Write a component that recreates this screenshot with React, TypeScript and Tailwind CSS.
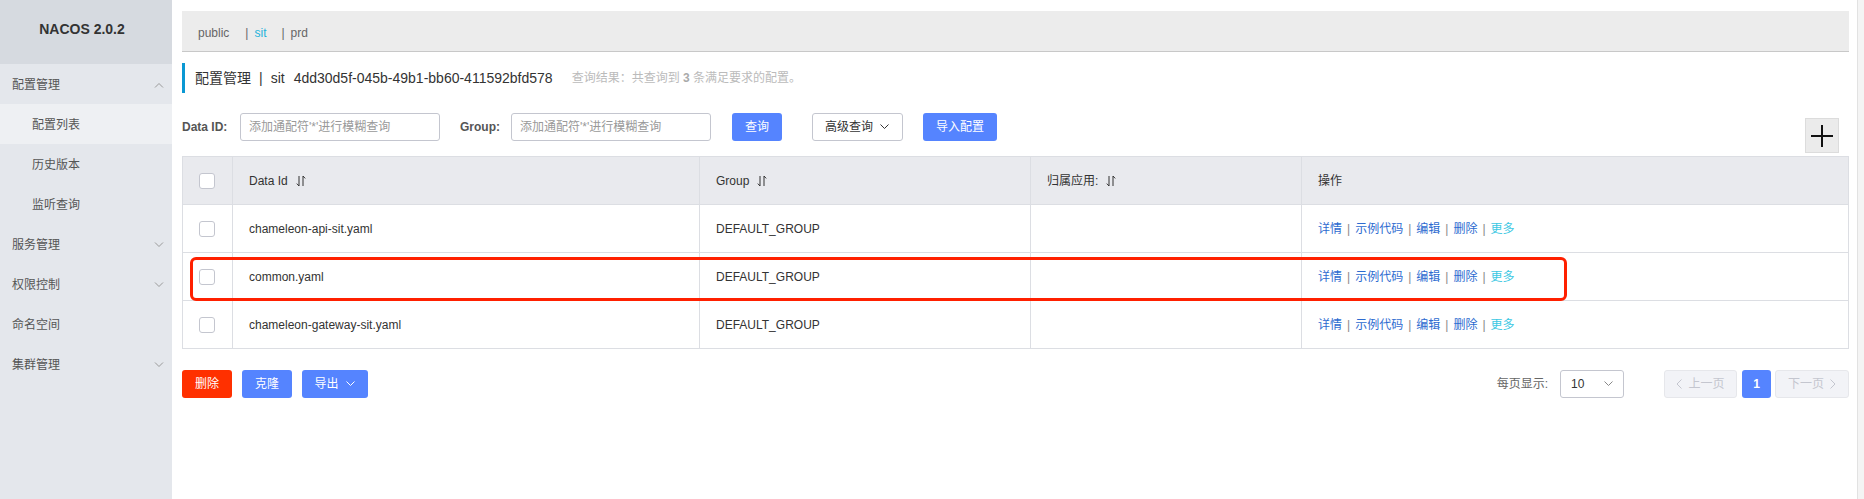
import React from 'react';

const FONT = "font-['Liberation_Sans','Noto_Sans_CJK_SC',sans-serif]";

const Chevron = ({ up = false, className = '' }: { up?: boolean; className?: string }) => (
  <svg width="10" height="6" viewBox="0 0 10 6" className={className}>
    <polyline
      points={up ? '1,5.5 5,1.5 9,5.5' : '1,0.5 5,4.5 9,0.5'}
      fill="none"
      stroke="currentColor"
      strokeWidth="1"
    />
  </svg>
);

const SortIcon = () => (
  <svg width="10" height="12" viewBox="0 0 10 12" className="ml-[8px] text-[#333]">
    <path d="M3 1V11L0.8 8.6M7 11V1L9.2 3.4" fill="none" stroke="currentColor" strokeWidth="1" />
  </svg>
);

const Checkbox = () => (
  <span className="block w-4 h-4 rounded-[3px] border border-[#c4c6cf] bg-white" />
);

const menu = [
  { label: '配置管理', open: true, children: ['配置列表', '历史版本', '监听查询'] },
  { label: '服务管理', arrow: true },
  { label: '权限控制', arrow: true },
  { label: '命名空间' },
  { label: '集群管理', arrow: true },
];

const rows = ['chameleon-api-sit.yaml', 'common.yaml', 'chameleon-gateway-sit.yaml'];

const Sidebar = () => (
  <aside className="w-[172px] shrink-0 bg-[#e4e7ec] text-[12px] text-[#555]">
    <div className="h-16 bg-[#d6dae0] flex justify-center pt-[21px] pr-[8px]">
      <span className="text-[14px] font-bold text-[#333] leading-4">NACOS 2.0.2</span>
    </div>
    {menu.map((m) => (
      <div key={m.label}>
        <div className="h-10 flex items-center justify-between pl-[12px] pr-[8px] pt-[1px]">
          <span>{m.label}</span>
          {m.open && <Chevron up className="text-[#999]" />}
          {m.arrow && <Chevron className="text-[#999]" />}
        </div>
        {m.children?.map((c, i) => (
          <div
            key={c}
            className={`h-10 flex items-center pl-[32px] pt-[1px] ${i === 0 ? 'bg-[#eef0f3]' : ''}`}
          >
            {c}
          </div>
        ))}
      </div>
    ))}
  </aside>
);

const Btn = ({ children, className = '' }: { children: React.ReactNode; className?: string }) => (
  <button
    className={`h-[28px] rounded-[3px] text-white text-[12px] flex items-center justify-center ${className}`}
  >
    {children}
  </button>
);

const Ops = () => (
  <div className="flex items-center text-[12px] text-[#2d6bd0]">
    <span>详情</span>
    <span className="mx-[5px] text-[#888]">|</span>
    <span>示例代码</span>
    <span className="mx-[5px] text-[#888]">|</span>
    <span>编辑</span>
    <span className="mx-[5px] text-[#888]">|</span>
    <span>删除</span>
    <span className="mx-[5px] text-[#888]">|</span>
    <span className="text-[#3cc8e3]">更多</span>
  </div>
);

export default function App() {
  return (
    <div className={`relative flex w-[1864px] h-[499px] bg-white overflow-hidden ${FONT}`}>
      <Sidebar />
      <main className="flex-1 pl-[10px] pr-[8px] text-[#333]">
        {/* namespace tabs */}
        <div className="mt-[11px] h-[41px] bg-[#ececec] border-b border-[#c8c8c8] flex items-center pl-[16px] pt-[3px] text-[12px] text-[#666]">
          <span className="mr-[16px]">public</span>
          <span className="mr-[15px]">
            |<span className="ml-[6px] text-[#1fb3db]">sit</span>
          </span>
          <span>
            |<span className="ml-[6px]">prd</span>
          </span>
        </div>

        {/* title */}
        <div className="mt-[11px] h-[30px] border-l-[3px] border-[#0a98d3] flex items-center pl-[10px]">
          <span className="text-[14px] text-[#333]">配置管理</span>
          <span className="text-[14px] mx-[8px] text-[#333]">|</span>
          <span className="text-[14px] text-[#333]">sit</span>
          <span className="text-[14px] ml-[9px] text-[#333]">4dd30d5f-045b-49b1-bb60-411592bfd578</span>
          <span className="ml-[19px] text-[12px] text-[#bbb]">
            查询结果：共查询到 <b className="text-[#aaa]">3</b> 条满足要求的配置。
          </span>
        </div>

        {/* search */}
        <div className="mt-[20px] flex items-end justify-between">
          <div className="flex items-center h-[28px]">
            <label className="text-[12px] font-bold text-[#555] w-[58px]">Data ID:</label>
            <div className="w-[200px] h-[28px] border border-[#c4c6cf] rounded-[3px] flex items-center px-[8px] text-[12px] text-[#999]">
              添加通配符'*'进行模糊查询
            </div>
            <label className="ml-[20px] text-[12px] font-bold text-[#555] w-[51px]">Group:</label>
            <div className="w-[200px] h-[28px] border border-[#c4c6cf] rounded-[3px] flex items-center px-[8px] text-[12px] text-[#999]">
              添加通配符'*'进行模糊查询
            </div>
            <Btn className="ml-[21px] w-[50px] bg-[#5584ff]">查询</Btn>
            <button className="ml-[30px] w-[91px] h-[28px] border border-[#c4c6cf] rounded-[3px] bg-white text-[12px] text-[#333] flex items-center justify-center gap-[6px]">
              高级查询
              <Chevron className="text-[#333] w-[11px]" />
            </button>
            <Btn className="ml-[20px] w-[74px] bg-[#5584ff]">导入配置</Btn>
          </div>
          <button className="mr-[10px] mb-[-12px] w-[34px] h-[35px] bg-[#ebebeb] border border-[#dcdcdc] flex items-center justify-center">
            <svg width="22" height="22" viewBox="0 0 22 22">
              <path d="M11 0V22M0 11H22" stroke="#111" strokeWidth="2" />
            </svg>
          </button>
        </div>

        {/* table */}
        <table className="mt-[15px] w-full table-fixed border-collapse border border-[#dcdee3] text-[12px] text-[#333]">
          <colgroup>
            <col className="w-[50px]" />
            <col className="w-[467px]" />
            <col className="w-[331px]" />
            <col className="w-[271px]" />
            <col />
          </colgroup>
          <thead>
            <tr className="h-[48px] bg-[#e9eaee]">
              <th className="border border-[#dcdee3] pl-[16px]">
                <Checkbox />
              </th>
              <th className="border border-[#dcdee3] pl-[16px] text-left font-normal">
                <span className="flex items-center">
                  Data Id
                  <SortIcon />
                </span>
              </th>
              <th className="border border-[#dcdee3] pl-[16px] text-left font-normal">
                <span className="flex items-center">
                  Group
                  <SortIcon />
                </span>
              </th>
              <th className="border border-[#dcdee3] pl-[16px] text-left font-normal">
                <span className="flex items-center">
                  归属应用:
                  <SortIcon />
                </span>
              </th>
              <th className="border border-[#dcdee3] pl-[16px] text-left font-normal">操作</th>
            </tr>
          </thead>
          <tbody>
            {rows.map((r) => (
              <tr key={r} className="h-[48px]">
                <td className="border border-[#dcdee3] pl-[16px]">
                  <Checkbox />
                </td>
                <td className="border border-[#dcdee3] pl-[16px]">{r}</td>
                <td className="border border-[#dcdee3] pl-[16px]">DEFAULT_GROUP</td>
                <td className="border border-[#dcdee3] pl-[16px]"></td>
                <td className="border border-[#dcdee3] pl-[16px]">
                  <Ops />
                </td>
              </tr>
            ))}
          </tbody>
        </table>

        {/* footer */}
        <div className="mt-[21px] flex items-center justify-between">
          <div className="flex items-center gap-[10px]">
            <Btn className="w-[50px] bg-[#ff3000]">删除</Btn>
            <Btn className="w-[50px] bg-[#5584ff]">克隆</Btn>
            <Btn className="w-[66px] bg-[#5584ff] gap-[6px]">
              导出
              <Chevron className="text-white w-[11px]" />
            </Btn>
          </div>
          <div className="flex items-center text-[12px]">
            <span className="text-[#666]">每页显示:</span>
            <div className="ml-[12px] w-[64px] h-[28px] border border-[#c4c6cf] rounded-[3px] flex items-center justify-between pl-[10px] pr-[9px] text-[#333]">
              10
              <Chevron className="text-[#888] w-[11px]" />
            </div>
            <div className="ml-[40px] w-[73px] h-[28px] rounded-[3px] border border-[#e6e7eb] bg-[#f2f3f7] text-[#c4c6cf] flex items-center justify-center gap-[6px]">
              <svg width="6" height="10" viewBox="0 0 6 10">
                <polyline points="5.5,0.5 1,5 5.5,9.5" fill="none" stroke="currentColor" strokeWidth="1" />
              </svg>
              上一页
            </div>
            <div className="ml-[5px] w-[29px] h-[28px] rounded-[3px] bg-[#5584ff] text-white flex items-center justify-center font-bold">
              1
            </div>
            <div className="ml-[4px] w-[74px] h-[28px] rounded-[3px] border border-[#e6e7eb] bg-[#f2f3f7] text-[#c4c6cf] flex items-center justify-center gap-[6px]">
              下一页
              <svg width="6" height="10" viewBox="0 0 6 10">
                <polyline points="0.5,0.5 5,5 0.5,9.5" fill="none" stroke="currentColor" strokeWidth="1" />
              </svg>
            </div>
          </div>
        </div>
      </main>
      <div className="w-[7px] shrink-0 bg-[#f4f4f4] border-l border-[#e2e2e2]" />

      {/* highlight annotation */}
      <div className="absolute left-[190px] top-[257px] w-[1377px] h-[44px] border-[3px] border-[#ff2000] rounded-[6px] pointer-events-none" />
    </div>
  );
}
